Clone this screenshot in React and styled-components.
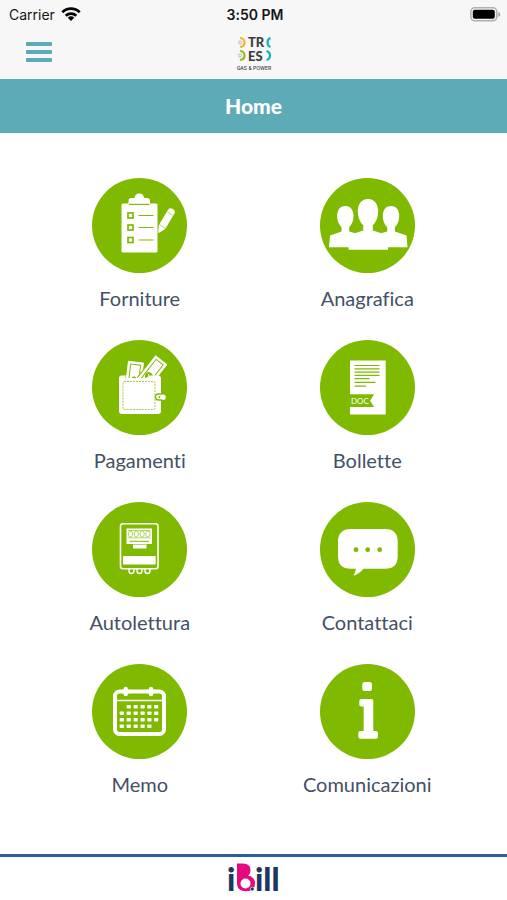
import styled, { createGlobalStyle } from "styled-components";

const GREEN = "#7fba00";

const FornitureIcon = () => (
  <svg viewBox="0 0 95 95" aria-hidden="true">
    <rect x="29.5" y="25.5" width="36" height="49" rx="1.5" fill="#fff" />
    <path
      d="M36.5 26v-3q0-3 3-3h3q.5-4.500 4.800-4.500t4.800 4.500h2.900q3 0 3 3v3z"
      fill="#fff"
    />
    <path d="M37 26.400h20.500" stroke={GREEN} strokeWidth="1.200" />
    <g fill="none" stroke={GREEN} strokeWidth="1.700">
      <rect x="36" y="35" width="5" height="5" />
      <rect x="36" y="47" width="5" height="5" />
      <rect x="36" y="59.500" width="5" height="5" />
      <path d="M46.500 37.500h15M46.500 49.500h15M46.500 62h15" strokeWidth="1.200" />
    </g>
    <g transform="translate(67 54) rotate(31)">
      <path
        d="M0 0l-3-6v-17.500q0-2.500 3-2.500t3 2.500v17.500z"
        fill="#fff"
        stroke="#fff"
        strokeWidth="1.500"
        strokeLinejoin="round"
      />
      <path d="M-3.500-6.500h7M-3.500-21.500h7" stroke={GREEN} strokeWidth=".5" />
    </g>
  </svg>
);

const AnagraficaIcon = () => (
  <svg viewBox="0 0 95 95" aria-hidden="true">
    <g fill="#fff">
      <path d="M25.300 28c5.700 0 8.200 4.600 8.200 10 0 5-1.700 8.500-4.300 11.300v4.200l12 3.500v12.200H9L10 57.500l11.500-4v-4.200c-2.700-2.800-4.400-6.300-4.400-11.300 0-5.400 2.500-10 8.200-10z" />
      <path d="M71 28c5.700 0 8.200 4.600 8.200 10 0 5-1.700 8.500-4.300 11.300v4.200l11.600 4 1 11.700H55V57l12.200-3.500v-4.200c-2.700-2.800-4.400-6.300-4.400-11.300 0-5.400 2.500-10 8.200-10z" />
      <path d="M48 21c7 0 10.200 5.600 10.200 12.500 0 6-2.200 10.500-5.400 14v5l14.200 4.500 1 14.700H28.500L29.500 57l13.800-4.500v-5c-3.300-3.500-5.500-8-5.500-14C37.800 26.600 41 21 48 21z" />
    </g>
  </svg>
);

const PagamentiIcon = () => (
  <svg viewBox="0 0 95 95" aria-hidden="true">
    <g stroke="#fff" fill={GREEN}>
      <g transform="rotate(7 42 30)">
        <rect x="35.500" y="22" width="15" height="24" fill="#fff" />
        <rect x="38" y="24.500" width="10" height="21" fill="#fff" stroke={GREEN} />
        <circle cx="43" cy="39" r="2.500" stroke="none" />
      </g>
      <g transform="translate(-1 -1) rotate(38 62 30)">
        <rect x="56" y="18" width="14" height="34" fill="#fff" stroke={GREEN} strokeWidth="3" />
        <rect x="56" y="18" width="14" height="34" fill="#fff" />
        <rect x="58.500" y="20.500" width="9" height="29" fill="#fff" stroke={GREEN} />
        <circle cx="63" cy="38" r="3.800" stroke="none" />
        <path d="M61.500 36.500l3 3" />
      </g>
    </g>
    <rect x="27" y="38" width="42" height="36" rx="3" fill="#fff" />
    <path d="M27 41v-3q0-2.500 2.500-2.500H34l-1 4z" fill="#fff" />
    <path d="M54 38l4-2.500h8q3 0 3 3V41z" fill="#fff" />
    <rect
      x="31"
      y="41.500"
      width="32"
      height="28"
      rx="1"
      fill="none"
      stroke={GREEN}
      strokeWidth=".7"
      strokeDasharray="2 1"
    />
    <path
      d="M73 54h-6.500a3 3 0 0 0 0 6H73z"
      fill="#fff"
      stroke={GREEN}
      strokeWidth="1.300"
    />
    <circle cx="67.500" cy="57" r="1" fill={GREEN} />
    <path d="M70 54.700h2q1.500 0 1.500 1.500v2q0 1.500-1.500 1.500h-2z" fill="#fff" />
  </svg>
);

const BolletteIcon = () => (
  <svg viewBox="0 0 95 95" aria-hidden="true">
    <rect x="30" y="20.500" width="35.700" height="54" fill="#fff" />
    <path
      d="M34.500 25.500h25M34.500 28.800h25M34.500 32.100h25M34.500 35.400h25M34.500 38.700h15M34.500 42.400h21M34.500 46.200H46"
      stroke={GREEN}
      strokeWidth="1.200"
    />
    <path d="M29 54.300h25.200l-4.200 6.400 4.200 6.400H29z" fill={GREEN} />
    <text x="31" y="64" fill="#fff" fontFamily="Lato, sans-serif" fontSize="8">
      DOC
    </text>
  </svg>
);

const AutoletturaIcon = () => (
  <svg viewBox="0 0 95 95" aria-hidden="true">
    <rect x="28.500" y="21.800" width="37.500" height="45" rx="2.500" fill="none" stroke="#fff" strokeWidth="1.600" />
    <path d="M34.500 26.500H60V42h-5.500v4.500H41V42h-6.500z" fill="#fff" />
    <g fill="none" stroke={GREEN} strokeWidth=".6">
      <path d="M36 28.500h22.500M36 35.800h22.500M41 42.500h13.500" />
      <ellipse cx="38.500" cy="32" rx="2.200" ry="3" />
      <ellipse cx="44.300" cy="32" rx="2.200" ry="3" />
      <ellipse cx="50.100" cy="32" rx="2.200" ry="3" />
      <ellipse cx="55.900" cy="32" rx="2.200" ry="3" />
    </g>
    <path d="M37.500 39.300h19.500" stroke={GREEN} />
    <rect x="31" y="54" width="32.700" height="8.500" rx=".8" fill="#fff" />
    <path
      d="M37 67v2a2.500 2.500 0 0 0 5 0v-2M45 67v2a2.500 2.500 0 0 0 5 0v-2M53 67v2a2.500 2.500 0 0 0 5 0v-2"
      fill="none"
      stroke="#fff"
      strokeWidth="1.400"
    />
  </svg>
);

const ContattaciIcon = () => (
  <svg viewBox="0 0 95 95" aria-hidden="true">
    <path
      d="M31 27h34q12.700 0 12.700 12.500v14.700q0 12.500-12.700 12.500H43.500q-3.500 4.500-10 7 2-3.500 2.500-7h-5q-13 0-13-12.500V39.500Q18 27 31 27z"
      fill="#fff"
    />
    <g fill={GREEN}>
      <circle cx="36" cy="47.700" r="2.400" />
      <circle cx="47.700" cy="47.700" r="2.400" />
      <circle cx="59.700" cy="47.700" r="2.400" />
    </g>
  </svg>
);

const calendarRows = [
  { y: 41, columns: [36.7, 43.7, 50.6, 57.4, 64.2] },
  { y: 47.5, columns: [29.8, 36.7, 43.7, 50.6, 57.4, 64.2] },
  { y: 54, columns: [29.8, 36.7, 43.7, 50.6, 57.4, 64.2] },
  { y: 60.5, columns: [29.8, 36.7, 43.7, 50.6, 57.4] },
];

const MemoIcon = () => (
  <svg viewBox="0 0 95 95" aria-hidden="true">
    <rect x="23" y="27.500" width="49" height="42.500" rx="4.500" fill="none" stroke="#fff" strokeWidth="4" />
    <path d="M22 36.500h50" stroke="#fff" strokeWidth="1.500" />
    <path d="M33.700 25v5M59 25v5" stroke={GREEN} strokeWidth="6" strokeLinecap="round" />
    <path d="M33.700 25v5M59 25v5" stroke="#fff" strokeWidth="4.500" strokeLinecap="round" />
    <path d="M30 27.500h8M55 27.500h8" stroke="#fff" strokeWidth="4" />
    {calendarRows.map((row) =>
      row.columns.map((x) => (
        <rect key={`${row.y}-${x}`} x={x - 2.1} y={row.y} width="4.200" height="3.600" rx=".8" fill="#fff" />
      ))
    )}
  </svg>
);

const ComunicazioniIcon = () => (
  <svg viewBox="0 0 95 95" aria-hidden="true">
    <rect x="42.300" y="18" width="9.700" height="9" rx="2.500" fill="#fff" />
    <path
      d="M41.300 35h10q2 0 2 2v30h2.700q2 0 2 2v3.700q0 2-2 2H40.300q-2 0-2-2V69q0-2 2-2h3.400V42.500h-2.400q-2 0-2-2V37q0-2 2-2z"
      fill="#fff"
    />
  </svg>
);

const menuItems = [
  { label: "Forniture", icon: FornitureIcon },
  { label: "Anagrafica", icon: AnagraficaIcon },
  { label: "Pagamenti", icon: PagamentiIcon },
  { label: "Bollette", icon: BolletteIcon },
  { label: "Autolettura", icon: AutoletturaIcon },
  { label: "Contattaci", icon: ContattaciIcon },
  { label: "Memo", icon: MemoIcon },
  { label: "Comunicazioni", icon: ComunicazioniIcon },
];

const WifiIcon = () => (
  <svg width="20" height="14" viewBox="0 0 20 14" aria-hidden="true">
    <g fill="none" stroke="#050505" strokeWidth="2.800">
      <path d="M1.300 5.200a12.500 12.500 0 0 1 17.400 0" />
      <path d="M4.700 8.800a7.700 7.700 0 0 1 10.600 0" />
    </g>
    <path d="M10 14l-3.200-3.300a4.500 4.500 0 0 1 6.400 0z" fill="#050505" />
  </svg>
);

const BatteryIcon = () => (
  <svg width="31" height="15" viewBox="0 0 31 15" aria-hidden="true">
    <rect x=".8" y=".8" width="26" height="13" rx="4" fill="#f7f7f7" stroke="#b0b0b0" strokeWidth="1.500" />
    <rect x="2.800" y="2.800" width="22" height="9" rx="2" fill="#000" />
    <path d="M28.300 5v5q2-.7 2-2.500t-2-2.500z" fill="#a5a5a5" />
  </svg>
);

const TresLogo = () => (
  <svg width="40" height="42" viewBox="0 0 40 42" role="img" aria-label="Tres Gas & Power">
    <g fill="none" strokeWidth="2.200">
      <path d="M6 7q4.500.5 4.500 4.500T6 16" stroke="#f2b632" />
      <path d="M6 20q4.500.5 4.500 4.500T6 29" stroke="#92bd22" />
      <path d="M36.500 7q-3 1-3 4.500t3 4.500" stroke="#18b2bd" />
      <path d="M32.500 20q3.500 1 3.500 4.500t-3.500 4.500" stroke="#18b2bd" />
    </g>
    <g fill="none" stroke="#b5b5b5">
      <circle cx="6" cy="11.500" r="1.500" />
      <circle cx="6" cy="24.500" r="1.500" />
    </g>
    <g fill="#3d3d3f" fontFamily="Lato, sans-serif" fontWeight="900">
      <text x="14" y="16" fontSize="13">TR</text>
      <text x="14" y="30" fontSize="13">ES</text>
    </g>
    <text
      x="20"
      y="38.500"
      fill="#3d3d3f"
      fontFamily="Inter, sans-serif"
      fontSize="5"
      fontWeight="500"
      textAnchor="middle"
    >
      GAS &amp; POWER
    </text>
  </svg>
);

const IBillLogo = () => (
  <svg width="54" height="43" viewBox="0 0 54 43" role="img" aria-label="iBill">
    <g fill="#1c365f" fontFamily="Lato, sans-serif" fontWeight="900" fontSize="32">
      <text x="0" y="34">i</text>
      <text x="28" y="34">ill</text>
    </g>
    <path
      d="M10 6.500h6q7.500 0 7.500 6.500 0 4-2.500 5.500 7 1.500 7 8 0 7.500-9 7.800-9 0-9-8z"
      fill="#e6087e"
    />
    <circle cx="18.500" cy="26.500" r="5" fill="#fff" />
    <circle cx="25.300" cy="32" r="1.900" fill="#1c365f" stroke="#fff" strokeWidth=".6" />
  </svg>
);

const App = () => {
  return (
    <>
      <GlobalStyle />
      <Page>
        <Header>
          <StatusBar>
            <Carrier>
              Carrier <WifiIcon />
            </Carrier>
            <Clock>3:50 PM</Clock>
            <Battery>
              <BatteryIcon />
            </Battery>
          </StatusBar>
          <NavBar>
            <MenuButton type="button" aria-label="Menu">
              <span />
              <span />
              <span />
            </MenuButton>
            <TresLogo />
          </NavBar>
        </Header>
        <Title>Home</Title>
        <MenuGrid>
          {menuItems.map(({ label, icon: Icon }) => (
            <MenuItem href="#" key={label}>
              <Circle>
                <Icon />
              </Circle>
              {label}
            </MenuItem>
          ))}
        </MenuGrid>
        <Footer>
          <IBillLogo />
        </Footer>
      </Page>
    </>
  );
};

export default App;

const GlobalStyle = createGlobalStyle`
  * {
    box-sizing: border-box;
  }
  body {
    margin: 0;
    background: #fff;
    font-family: Lato, sans-serif;
    font-variant-ligatures: none;
  }
  svg {
    display: block;
    overflow: visible;
  }
`;

const Page = styled.div`
  min-height: 100vh;
  display: flex;
  flex-direction: column;
`;

const Header = styled.header`
  background: #f7f7f7;
`;

const StatusBar = styled.div`
  display: grid;
  grid-template-columns: 1fr auto 1fr;
  align-items: center;
  height: 28px;
  padding: 0 6px 0 9px;
  color: #151515;
  font-family: Inter, sans-serif;
  font-size: 14px;
`;

const Carrier = styled.div`
  display: flex;
  align-items: center;
  gap: 6px;
`;

const Clock = styled.div`
  font-weight: 600;
`;

const Battery = styled.div`
  justify-self: end;
`;

const NavBar = styled.div`
  display: grid;
  grid-template-columns: 1fr auto 1fr;
  align-items: center;
  height: 51px;
  padding: 0 26px 4px;
`;

const MenuButton = styled.button`
  all: unset;
  display: flex;
  flex-direction: column;
  gap: 4px;
  width: 26px;
  cursor: pointer;

  span {
    height: 4px;
    border-radius: 1px;
    background: #5dabb6;
  }
`;

const Title = styled.h1`
  margin: 0;
  padding: 14px;
  background: #5dabb6;
  color: #fff;
  font-size: 21px;
  font-weight: 900;
  line-height: 26px;
  text-align: center;
`;

const MenuGrid = styled.nav`
  display: grid;
  grid-template-columns: 1fr 1fr;
  row-gap: 28px;
  padding: 45px 26px;
`;

const MenuItem = styled.a`
  display: flex;
  flex-direction: column;
  align-items: center;
  gap: 11px;
  color: #435066;
  font-size: 20px;
  line-height: 28px;
  text-decoration: none;
`;

const Circle = styled.div`
  width: 95px;
  height: 95px;
  border-radius: 50%;
  background: ${GREEN};
`;

const Footer = styled.footer`
  display: flex;
  justify-content: center;
  margin-top: auto;
  border-top: 3px solid #2d609a;
`;
